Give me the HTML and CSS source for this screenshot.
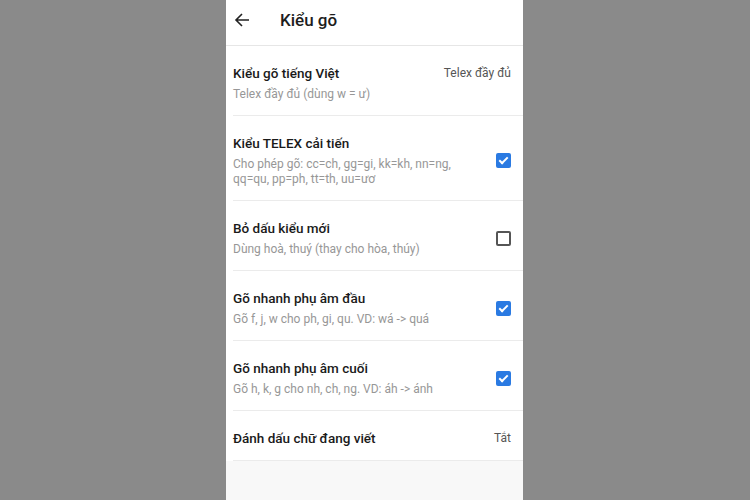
FILE: index.html
```html
<!DOCTYPE html>
<html lang="vi">

<head>
    <meta charset="UTF-8" />
    <meta name="viewport" content="width=device-width, initial-scale=1.0" />
    <title>Kiểu gõ</title>

    <link rel="stylesheet" href="styles.css">

</head>

<body>
    <div class="screen">

        <header class="topbar">
            <svg class="back" width="16" height="16" viewBox="0 0 16 16">
                <path d="M15 8H2M8 2L2 8l6 6" fill="none" stroke="#222" stroke-width="1.6" />
            </svg>
            <h1>Kiểu gõ</h1>
        </header>

        <main class="settings">

            <div class="row">
                <div class="text">
                    <div class="title">Kiểu gõ tiếng Việt</div>
                    <div class="sub">Telex đầy đủ (dùng w = ư)</div>
                </div>
                <div class="value">Telex đầy đủ</div>
            </div>

            <div class="row">
                <div class="text">
                    <div class="title">Kiểu TELEX cải tiến</div>
                    <div class="sub">Cho phép gõ: cc=ch, gg=gi, kk=kh, nn=ng,<br>qq=qu, pp=ph, tt=th, uu=ươ</div>
                </div>
                <span class="check on"></span>
            </div>

            <div class="row">
                <div class="text">
                    <div class="title">Bỏ dấu kiểu mới</div>
                    <div class="sub">Dùng hoà, thuý (thay cho hòa, thúy)</div>
                </div>
                <span class="check"></span>
            </div>

            <div class="row">
                <div class="text">
                    <div class="title">Gõ nhanh phụ âm đầu</div>
                    <div class="sub">Gõ f, j, w cho ph, gi, qu. VD: wá -> quá</div>
                </div>
                <span class="check on"></span>
            </div>

            <div class="row">
                <div class="text">
                    <div class="title">Gõ nhanh phụ âm cuối</div>
                    <div class="sub">Gõ h, k, g cho nh, ch, ng. VD: áh -> ánh</div>
                </div>
                <span class="check on"></span>
            </div>

            <div class="row">
                <div class="text">
                    <div class="title">Đánh dấu chữ đang viết</div>
                </div>
                <div class="value">Tắt</div>
            </div>

        </main>
    </div>
</body>

</html>
```

FILE: styles.css
```css
html,
body {
    margin: 0;
    height: 100%;
}

body {
    background-color: #8a8a8a;
    font-family: Roboto, "Noto Sans", sans-serif;
    color: #222;
}

.screen {
    width: 297px;
    height: 100%;
    margin: 0 auto 0 226px;
    background-color: #f8f8f8;
}

.topbar {
    display: flex;
    align-items: center;
    height: 45px;
    padding-left: 8px;
    background-color: #fff;
    border-bottom: 1px solid #e6e6e6;
}

.back {
    margin-top: -6px;
}

.topbar h1 {
    margin: -5px 0 0 30px;
    font-size: 17px;
    font-weight: 500;
    color: #1d1d1d;
}

.settings {
    background-color: #fff;
    padding-left: 7px;
}

.row {
    display: flex;
    align-items: center;
    padding: 18px 12px 13px 0;
    border-bottom: 1px solid #ebebeb;
}

.text {
    flex: 1;
}

.title {
    font-size: 13.5px;
    line-height: 18px;
    font-weight: 500;
    color: #1a1a1a;
}

.sub {
    margin-top: 5px;
    font-size: 12px;
    line-height: 15px;
    color: #979797;
}

.value {
    align-self: flex-start;
    margin-top: 1px;
    font-size: 12px;
    line-height: 16px;
    color: #555;
}

.check {
    position: relative;
    width: 11px;
    height: 11px;
    border: 2px solid #555;
    border-radius: 2px;
}

.check.on {
    background-color: #2a7ae2;
    border-color: #2a7ae2;
}

.check.on::after {
    content: "";
    position: absolute;
    left: 3px;
    top: 0px;
    width: 3px;
    height: 7px;
    border: solid #fff;
    border-width: 0 2px 2px 0;
    transform: rotate(45deg);
}
```
